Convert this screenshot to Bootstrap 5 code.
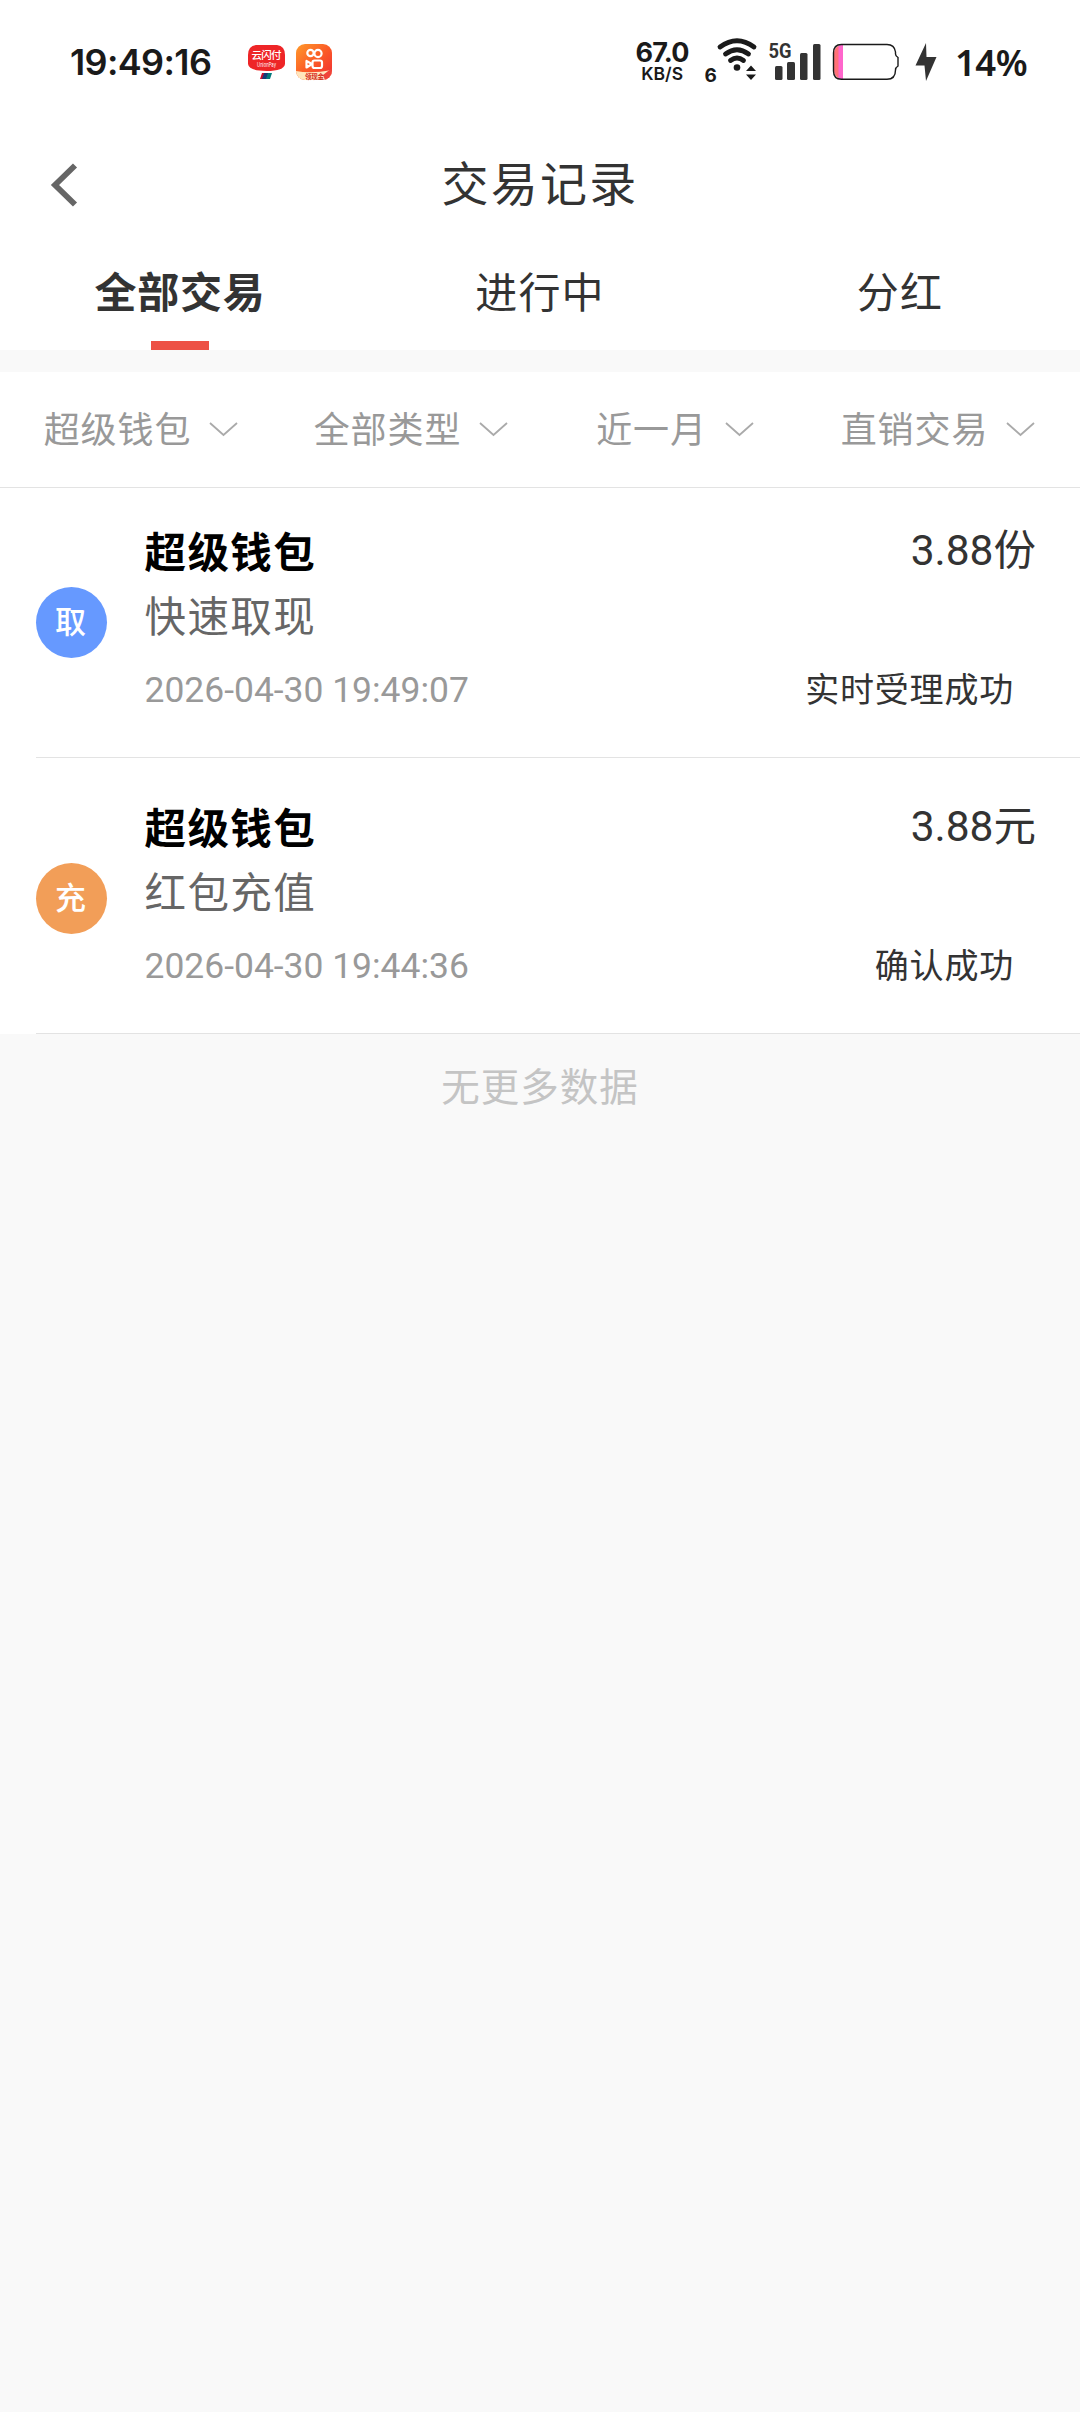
<!DOCTYPE html>
<html lang="zh-CN">
<head>
<meta charset="utf-8">
<meta name="viewport" content="width=device-width, initial-scale=1">
<title>交易记录</title>
<link href="https://cdn.jsdelivr.net/npm/bootstrap@5.3.0/dist/css/bootstrap.min.css" rel="stylesheet">
<style>
body{background:#f9f9f9;color:#333;font-family:Roboto,"Noto Sans CJK SC",sans-serif;min-height:2412px;overflow-x:hidden}
svg{display:block;flex:none;overflow:visible}
.statusbar{height:124px;padding:0 53px 0 70px;color:#1a1a1a;font-family:Inter,sans-serif}
.clock{font-size:36px;font-weight:600;line-height:40px;width:178px;letter-spacing:-.65px}
.app-two{margin-left:11px}
.speed{width:57px;text-align:center}
.speed-num{font-size:27px;line-height:22px;letter-spacing:-.8px;font-weight:700}
.speed-unit{font-size:17.5px;line-height:19px;font-weight:600}
.wifi{margin-left:12px}
.signal{margin-left:11px}
.battery{margin-left:11px}
.bolt{margin-left:15px}
.pct{font-family:"Noto Sans",sans-serif;font-weight:600;font-size:36.5px;line-height:40px;letter-spacing:-.6px;margin-left:18.5px}
.titlebar{height:124px}
.back{left:50px;top:40px}
.page-title{font-size:47px;line-height:122px;letter-spacing:2.3px;font-weight:400}
.tab-item{height:102px;font-size:42px;line-height:92px;letter-spacing:1.2px}
.tab-item.active{font-weight:700;letter-spacing:.8px}
.tab-item.active::after{content:"";display:block;width:58px;height:9px;margin:1px auto 0;background:#ed5145}
.filters{display:grid;grid-template-columns:282px 258px 270px 256px;margin-top:22px;height:116px;padding-top:2px;border-bottom:1px solid #e3e3e3;color:#999;font-size:36px;letter-spacing:.9px}
.filters svg{margin:0 0 2px 18px}
.txn{padding:40px 0 37px;margin-left:36px;border-bottom:1px solid #e3e3e3}
.txn:first-child{padding-top:34px}
.disc{width:71px;height:71px;margin-top:65px;color:#fff;font-size:31px;font-weight:500;line-height:72px;flex:none}
.disc span{position:relative;left:-1px}
.disc-blue{background:#6699ff}
.disc-orange{background:#f29e58}
.info{margin-left:37.5px}
.acct{font-size:41.5px;line-height:64px;font-weight:700;color:#000;letter-spacing:1.4px}
.kind{font-size:41.5px;line-height:64px;color:#666;letter-spacing:1.4px}
.stamp{font-size:35.45px;line-height:60px;margin-top:10px;color:#999}
.amount{font-size:42.5px;line-height:58px;margin-right:44px}
.state{font-size:34px;line-height:60px;margin:80px 66px 0 0;letter-spacing:.8px}
.nomore{font-size:38.5px;line-height:60px;margin-top:24px;color:#c4c4c4;letter-spacing:1px}
</style>
<script src="https://cdn.jsdelivr.net/npm/bootstrap@5.3.0/dist/js/bootstrap.bundle.min.js"></script>
</head>
<body>
<header class="bg-white">
  <div class="statusbar d-flex align-items-center">
    <div class="clock text-nowrap">19:49:16</div>
    <svg width="37" height="36" viewBox="0 0 37 36">
      <path d="M8 1H29Q37 2 37 11V20Q36 27 18.500 27Q1 27 0 20V11Q0 2 8 1Z" fill="#ee2527"/>
      <text x="18.500" y="15" text-anchor="middle" font-size="10.500" font-weight="500" fill="#fff" font-family="Noto Sans CJK SC" textLength="30">云闪付</text>
      <text x="18.500" y="23" text-anchor="middle" font-size="5.500" fill="#fff" font-family="Inter" textLength="19" lengthAdjust="spacingAndGlyphs">UnionPay</text>
      <path d="M14 29H19L17 35H12Z" fill="#c8102e"/><path d="M16 29H21L19 35H14Z" fill="#173b78"/><path d="M20 29H24L22 35H18Z" fill="#047a7c"/>
    </svg>
    <svg class="app-two" width="36" height="36" viewBox="0 0 36 36">
      <defs><linearGradient id="k" x1="0" y1="0" x2="1" y2="1"><stop offset="0" stop-color="#ff9a2a"/><stop offset=".5" stop-color="#fb5b27"/><stop offset="1" stop-color="#f02a35"/></linearGradient><clipPath id="kc"><rect width="36" height="36" rx="9"/></clipPath></defs>
      <g clip-path="url(#kc)"><rect width="36" height="36" fill="url(#k)"/><path d="M0 27Q15 30 36 26V36H0Z" fill="#ffe6bd"/><path d="M27 31L36 24V36H29Z" fill="#f0433a"/></g>
      <g fill="none" stroke="#fff" stroke-width="2.200"><circle cx="14.500" cy="9" r="3.200"/><circle cx="22" cy="9.500" r="3.600"/><rect x="16.500" y="16.500" width="9.500" height="7.500" rx="2"/><path d="M16 20L10.500 17V23.500Z" stroke-linejoin="round"/></g>
      <text x="9" y="34.500" font-size="6.500" font-weight="700" fill="#d52b1e" font-family="Noto Sans CJK SC" textLength="19">领现金</text>
    </svg>
    <div class="speed ms-auto">
      <div class="speed-num">67.0</div>
      <div class="speed-unit">KB/S</div>
    </div>
    <svg class="wifi" width="54" height="48" viewBox="702 37 54 48">
      <text x="703.500" y="80.500" font-size="19" font-weight="700" fill="#1a1a1a" font-family="Inter">6</text>
      <g fill="none" stroke="#1a1a1a" stroke-width="4.800" stroke-linecap="round"><path d="M719 46Q736 33.500 753 46"/><path d="M724.500 53Q736 44.500 747.500 53"/><path d="M729.500 59.500Q736 54.500 742.500 59.500"/></g>
      <circle cx="736" cy="66.500" r="3.300" fill="#1a1a1a"/><path d="M745 70L750 64.500L755 70ZM745 73.500L750 79L755 73.500Z" fill="#1a1a1a"/>
    </svg>
    <svg class="signal" width="53" height="44" viewBox="768 40 53 44">
      <text x="768.500" y="58" font-size="21" font-weight="700" fill="#333" font-family="Roboto" textLength="23" lengthAdjust="spacingAndGlyphs">5G</text>
      <g fill="#333"><rect x="775" y="66" width="7.500" height="14" rx="1.500"/><rect x="787" y="62" width="8" height="18" rx="1.500"/><rect x="800" y="53" width="7.500" height="27" rx="1.500"/><rect x="813" y="44" width="7.500" height="36" rx="1.500"/></g>
    </svg>
    <svg class="battery" width="68" height="38" viewBox="832 43 68 38">
      <defs><clipPath id="bc"><rect x="834" y="45" width="62" height="34" rx="8"/></clipPath></defs>
      <g clip-path="url(#bc)"><rect x="833" y="44" width="6" height="36" fill="#ff7278"/><rect x="838.500" y="44" width="4.500" height="36" fill="#ff66cc"/></g>
      <path d="M841.500 44.500H887Q894.500 44.500 895.500 52V54Q895.500 56 898 57.500V66Q895.500 67.500 895.500 70Q895.500 79.300 887 79.300H841.500Q833.500 79.300 833.500 71V53Q833.500 44.500 841.500 44.500Z" fill="none" stroke="#1a1a1a" stroke-width="1.400"/>
    </svg>
    <svg class="bolt" width="22" height="40" viewBox="915 43 22 40"><path d="M926 44L915.500 66.500H924.500L926 82L936.500 58H926.500Z" fill="#333"/></svg>
    <div class="pct">14%</div>
  </div>
  <div class="titlebar position-relative text-center">
    <svg class="back position-absolute" width="28" height="42" viewBox="0 0 28 42"><path d="M25 1.500L5 21L25 40.500" fill="none" stroke="#666" stroke-width="5.800"/></svg>
    <h1 class="page-title m-0">交易记录</h1>
  </div>
  <nav class="row g-0 text-center">
    <div class="col tab-item active">全部交易</div>
    <div class="col tab-item">进行中</div>
    <div class="col tab-item">分红</div>
  </nav>
</header>
<section class="filters bg-white">
  <div class="d-flex align-items-center justify-content-center">超级钱包<svg width="29" height="15" viewBox="0 0 29 15"><path d="M1 1L14.500 13L28 1" fill="none" stroke="#aaa" stroke-width="1.800"/></svg></div>
  <div class="d-flex align-items-center justify-content-center">全部类型<svg width="29" height="15" viewBox="0 0 29 15"><path d="M1 1L14.500 13L28 1" fill="none" stroke="#aaa" stroke-width="1.800"/></svg></div>
  <div class="d-flex align-items-center justify-content-center">近一月<svg width="29" height="15" viewBox="0 0 29 15"><path d="M1 1L14.500 13L28 1" fill="none" stroke="#aaa" stroke-width="1.800"/></svg></div>
  <div class="d-flex align-items-center justify-content-center">直销交易<svg width="29" height="15" viewBox="0 0 29 15"><path d="M1 1L14.500 13L28 1" fill="none" stroke="#aaa" stroke-width="1.800"/></svg></div>
</section>
<main class="bg-white">
  <article class="txn d-flex align-items-start">
    <div class="disc disc-blue rounded-circle text-center"><span>取</span></div>
    <div class="info"><div class="acct">超级钱包</div><div class="kind">快速取现</div><div class="stamp">2026-04-30 19:49:07</div></div>
    <div class="ms-auto text-end"><div class="amount">3.88份</div><div class="state">实时受理成功</div></div>
  </article>
  <article class="txn d-flex align-items-start">
    <div class="disc disc-orange rounded-circle text-center"><span>充</span></div>
    <div class="info"><div class="acct">超级钱包</div><div class="kind">红包充值</div><div class="stamp">2026-04-30 19:44:36</div></div>
    <div class="ms-auto text-end"><div class="amount">3.88元</div><div class="state">确认成功</div></div>
  </article>
</main>
<p class="nomore text-center mb-0">无更多数据</p>
</body>
</html>
